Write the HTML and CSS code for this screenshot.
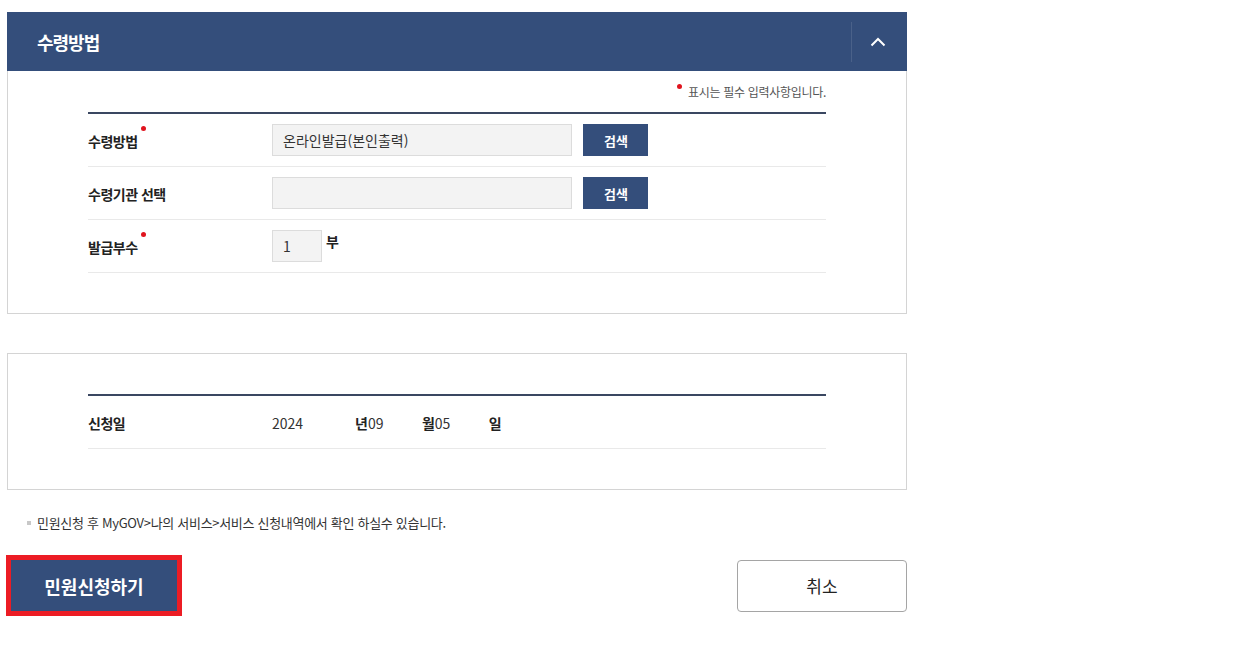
FILE: index.html
```html
<!DOCTYPE html>
<html lang="ko">
<head>
    <meta charset="UTF-8">
    <title>수령방법</title>
    <link rel="stylesheet" href="styles.css">
</head>
<body>
    <div class="wrap">
        <div class="section">
            <div class="section-head">
                <h2>수령방법</h2>
                <button type="button" class="toggle-btn">
                    <svg width="16" height="10" viewBox="0 0 16 10"><polyline points="1.5,8.5 8,2 14.5,8.5" fill="none" stroke="#fff" stroke-width="2"/></svg>
                </button>
            </div>
            <div class="section-body">
                <p class="req-notice"><span class="req-dot"></span>표시는 필수 입력사항입니다.</p>
                <table class="form-table">
                    <tr>
                        <th><span class="label req">수령방법</span></th>
                        <td>
                            <input type="text" class="field" value="온라인발급(본인출력)" readonly>
                            <button type="button" class="search-btn">검색</button>
                        </td>
                    </tr>
                    <tr>
                        <th><span class="label">수령기관 선택</span></th>
                        <td>
                            <input type="text" class="field" readonly>
                            <button type="button" class="search-btn">검색</button>
                        </td>
                    </tr>
                    <tr>
                        <th><span class="label req">발급부수</span></th>
                        <td class="count-cell">
                            <input type="text" class="field count" value="1" readonly><span class="unit">부</span>
                        </td>
                    </tr>
                </table>
            </div>
        </div>

        <div class="section date-section">
            <div class="section-body">
                <table class="form-table">
                    <tr>
                        <th><span class="label">신청일</span></th>
                        <td>
                            <span class="date-val year">2024</span><span class="unit">년</span><span class="date-val">09</span><span class="unit">월</span><span class="date-val">05</span><span class="unit">일</span>
                        </td>
                    </tr>
                </table>
            </div>
        </div>

        <p class="info-note">민원신청 후 MyGOV&gt;나의 서비스&gt;서비스 신청내역에서 확인 하실수 있습니다.</p>

        <div class="btn-row">
            <button type="button" class="apply-btn">민원신청하기</button>
            <button type="button" class="cancel-btn">취소</button>
        </div>
    </div>
</body>
</html>
```

FILE: styles.css
```css
body {
    margin: 0;
    font-family: "Noto Sans CJK KR", "Noto Sans", sans-serif;
    color: #222;
    background: #fff;
}

.wrap {
    width: 900px;
    padding: 12px 0 30px 7px;
}

.section-head {
    height: 59px;
    background: #344e7b;
    display: flex;
    align-items: center;
    justify-content: space-between;
}

.section-head h2 {
    margin: 0 0 0 30px;
    font-size: 18px;
    font-weight: bold;
    color: #fff;
    letter-spacing: -1px;
}

.toggle-btn {
    width: 56px;
    height: 40px;
    border: none;
    border-left: 1px solid #4a6189;
    background: transparent;
    padding: 0 3px 0 0;
    display: flex;
    align-items: center;
    justify-content: center;
    cursor: pointer;
}

.section-body {
    border: 1px solid #d4d4d4;
    border-top: none;
    padding: 0 80px 40px 80px;
}

.date-section {
    margin-top: 39px;
}

.date-section .section-body {
    border-top: 1px solid #d4d4d4;
    padding-top: 40px;
}

.req-notice {
    margin: 0;
    height: 41px;
    display: flex;
    align-items: center;
    justify-content: flex-end;
    font-size: 12px;
    letter-spacing: -0.3px;
    color: #555;
}

.req-dot {
    width: 5px;
    height: 5px;
    border-radius: 50%;
    background: #e0141e;
    margin: 0 6px 10px 0;
}

.form-table {
    width: 100%;
    border-collapse: collapse;
    border-top: 2px solid #3a4761;
}

.form-table th,
.form-table td {
    height: 52px;
    padding: 0;
    border-bottom: 1px solid #e9e9e9;
    text-align: left;
    vertical-align: middle;
}

.form-table th {
    width: 184px;
}

.label {
    position: relative;
    font-size: 14px;
    font-weight: bold;
    letter-spacing: -0.5px;
    color: #222;
}

.label.req::after {
    content: "";
    position: absolute;
    right: -8px;
    top: -5px;
    width: 5px;
    height: 5px;
    border-radius: 50%;
    background: #e0141e;
}

.field {
    box-sizing: border-box;
    width: 300px;
    height: 32px;
    border: 1px solid #dcdcdc;
    background: #f3f3f3;
    padding: 0 10px;
    font-family: inherit;
    font-size: 14px;
    color: #333;
    vertical-align: middle;
}

.field.count {
    width: 50px;
}

.search-btn {
    width: 65px;
    height: 32px;
    margin-left: 7px;
    border: none;
    background: #344e7b;
    color: #fff;
    font-family: inherit;
    font-size: 13px;
    font-weight: bold;
    vertical-align: middle;
    cursor: pointer;
}

.count-cell .unit {
    vertical-align: middle;
    position: relative;
    top: -5px;
    margin-left: 4px;
}

.unit {
    font-size: 14px;
    font-weight: bold;
}

.date-val {
    display: inline-block;
    width: 54px;
    font-size: 14px;
    color: #333;
}

.date-val.year {
    width: 83px;
}

.info-note {
    margin: 23px 0 0 20px;
    font-size: 13px;
    letter-spacing: -0.3px;
    color: #333;
    display: flex;
    align-items: center;
}

.info-note::before {
    content: "";
    width: 4px;
    height: 4px;
    background: #c8c8c8;
    margin-right: 6px;
}

.btn-row {
    margin-top: 23px;
    display: flex;
    justify-content: space-between;
    align-items: center;
}

.apply-btn {
    margin-left: -1px;
    width: 176px;
    height: 61px;
    border: 5px solid #ec1c24;
    background: #344e7b;
    color: #fff;
    font-family: inherit;
    font-size: 18px;
    font-weight: bold;
    cursor: pointer;
}

.cancel-btn {
    width: 170px;
    height: 52px;
    border: 1px solid #a5a5a5;
    border-radius: 4px;
    background: #fff;
    color: #222;
    font-family: inherit;
    font-size: 17px;
    cursor: pointer;
}
```
